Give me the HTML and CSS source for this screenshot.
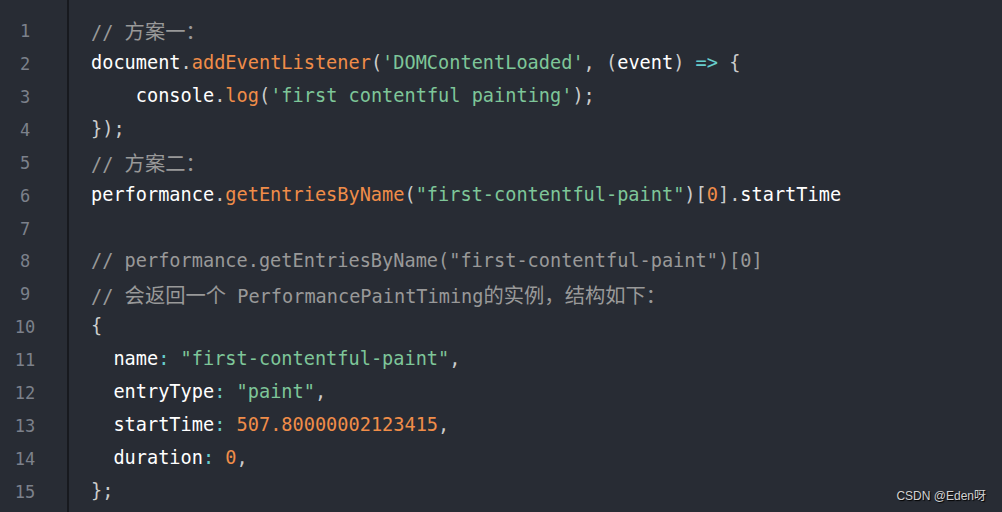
FILE: index.html
```html
<!DOCTYPE html>
<html lang="zh">
<head>
<meta charset="utf-8">
<title>code</title>
<link rel="stylesheet" href="styles.css">
</head>
<body>
<div class="block">
  <ol class="gutter">
    <li>1</li><li>2</li><li>3</li><li>4</li><li>5</li><li>6</li><li>7</li><li>8</li><li>9</li><li>10</li><li>11</li><li>12</li><li>13</li><li>14</li><li>15</li>
  </ol>
  <pre class="code"><code><span class="line"><span class="c">// <span class="cjk">方案一：</span></span></span>
<span class="line"><span class="w">document</span><span class="p">.</span><span class="f">addEventListener</span><span class="p">(</span><span class="s">'DOMContentLoaded'</span><span class="p">,</span> <span class="p">(</span><span class="w">event</span><span class="p">)</span> <span class="o">=&gt;</span> <span class="p">{</span></span>
<span class="line">    <span class="w">console</span><span class="p">.</span><span class="f">log</span><span class="p">(</span><span class="s">'first contentful painting'</span><span class="p">);</span></span>
<span class="line"><span class="p">});</span></span>
<span class="line"><span class="c">// <span class="cjk">方案二：</span></span></span>
<span class="line"><span class="w">performance</span><span class="p">.</span><span class="f">getEntriesByName</span><span class="p">(</span><span class="s">"first-contentful-paint"</span><span class="p">)[</span><span class="n">0</span><span class="p">].</span><span class="w">startTime</span></span>
<span class="line"> </span>
<span class="line"><span class="c">// performance.getEntriesByName("first-contentful-paint")[0]</span></span>
<span class="line"><span class="c">// <span class="cjk">会返回一个</span> PerformancePaintTiming<span class="cjk">的实例，结构如下：</span></span></span>
<span class="line"><span class="p">{</span></span>
<span class="line">  <span class="w">name</span><span class="o">:</span> <span class="s">"first-contentful-paint"</span><span class="p">,</span></span>
<span class="line">  <span class="w">entryType</span><span class="o">:</span> <span class="s">"paint"</span><span class="p">,</span></span>
<span class="line">  <span class="w">startTime</span><span class="o">:</span> <span class="n">507.80000002123415</span><span class="p">,</span></span>
<span class="line">  <span class="w">duration</span><span class="o">:</span> <span class="n">0</span><span class="p">,</span></span>
<span class="line"><span class="p">};</span></span></code></pre>
  <div class="mark">CSDN @Eden呀</div>
</div>
</body>
</html>
```
FILE: styles.css
```css
html, body {
  margin: 0;
  padding: 0;
  background: #282c34;
}
.block {
  position: relative;
  display: flex;
  width: 1002px;
  height: 512px;
  background: #282c34;
  overflow: hidden;
  box-sizing: border-box;
  padding-top: 14px;
}
.gutter {
  list-style: none;
  margin: -14px 0 0 0;
  padding: 15px 17px 0 0;
  width: 50px;
  border-right: 2px solid #17191e;
  font-family: "DejaVu Sans Mono", monospace;
  font-size: 17px;
  line-height: 32.93px;
  color: #7c818b;
  text-align: center;
}
.gutter li {
  height: 32.93px;
}
.code {
  margin: 0;
  padding: 0 0 0 22px;
  font-family: "DejaVu Sans Mono", "Noto Sans CJK SC", monospace;
  font-size: 18.6px;
  line-height: 32.93px;
  color: #cccccc;
}
.code code {
  font-family: inherit;
}
.line {
  display: inline-block;
  height: 32.93px;
  vertical-align: top;
}
.cjk {
  font-family: "Noto Sans CJK SC", sans-serif;
  font-size: 20.3px;
}
.w { color: #ffffff; }
.p { color: #cccccc; }
.f { color: #f08d49; }
.n { color: #f08d49; }
.s { color: #7ec699; }
.o { color: #67cdcc; }
.c { color: #999999; }
.mark {
  position: absolute;
  right: 16px;
  bottom: 9px;
  font-family: "Liberation Sans", "Noto Sans CJK SC", sans-serif;
  font-size: 12px;
  color: #d2d2d2;
  text-shadow: 1px 1px 1px #000;
}
```
